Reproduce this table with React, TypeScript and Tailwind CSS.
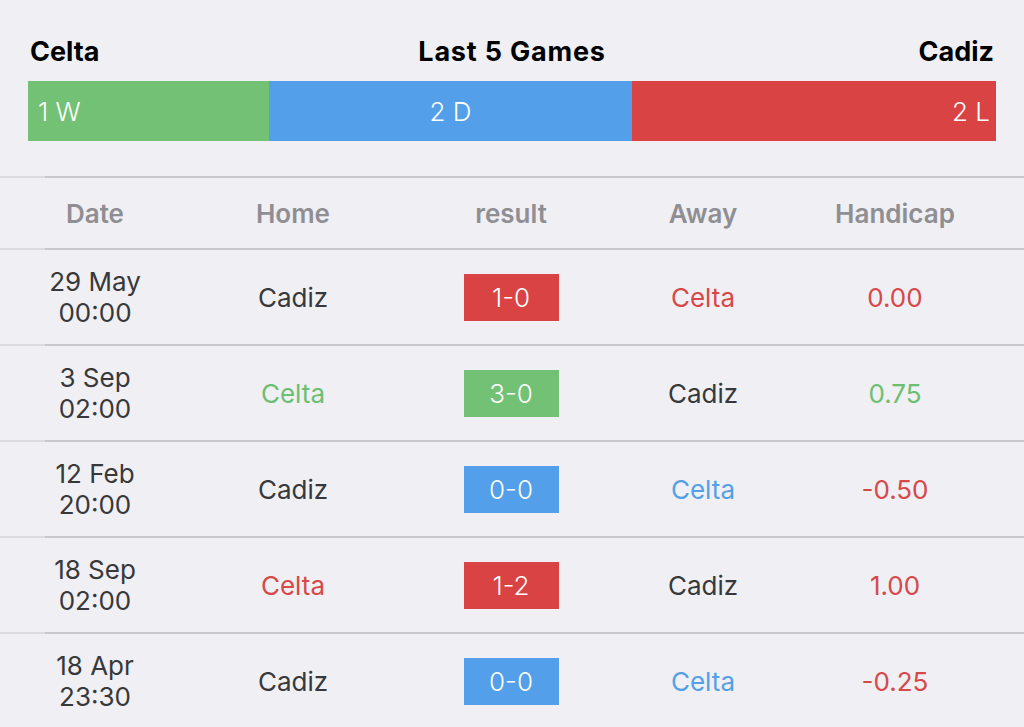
import React from 'react'

type Tone = 'red' | 'green' | 'blue' | 'dark'

interface Match {
	day: string
	time: string
	home: string
	homeTone: Tone
	score: string
	scoreTone: Tone
	away: string
	awayTone: Tone
	handicap: string
	handicapTone: Tone
}

const textTone: Record<Tone, string> = {
	red: 'text-[#d74848]',
	green: 'text-[#6cbf70]',
	blue: 'text-[#54a0e6]',
	dark: 'text-[#38383a]',
}

const badgeTone: Record<Tone, string> = {
	red: 'bg-[#d94343]',
	green: 'bg-[#72c175]',
	blue: 'bg-[#539fe9]',
	dark: 'bg-[#38383a]',
}

const matches: Match[] = [
	{ day: '29 May', time: '00:00', home: 'Cadiz', homeTone: 'dark', score: '1-0', scoreTone: 'red', away: 'Celta', awayTone: 'red', handicap: '0.00', handicapTone: 'red' },
	{ day: '3 Sep', time: '02:00', home: 'Celta', homeTone: 'green', score: '3-0', scoreTone: 'green', away: 'Cadiz', awayTone: 'dark', handicap: '0.75', handicapTone: 'green' },
	{ day: '12 Feb', time: '20:00', home: 'Cadiz', homeTone: 'dark', score: '0-0', scoreTone: 'blue', away: 'Celta', awayTone: 'blue', handicap: '-0.50', handicapTone: 'red' },
	{ day: '18 Sep', time: '02:00', home: 'Celta', homeTone: 'red', score: '1-2', scoreTone: 'red', away: 'Cadiz', awayTone: 'dark', handicap: '1.00', handicapTone: 'red' },
	{ day: '18 Apr', time: '23:30', home: 'Cadiz', homeTone: 'dark', score: '0-0', scoreTone: 'blue', away: 'Celta', awayTone: 'blue', handicap: '-0.25', handicapTone: 'red' },
]

const cols = 'grid grid-cols-[190px_206px_230px_154px_230px]'

function Separator() {
	return (
		<div className="flex h-[2px]">
			<div className="w-[45px] bg-[#dcdce0]" />
			<div className="flex-1 bg-[#c8c8cc]" />
		</div>
	)
}

export default function App() {
	return (
		<div className="w-[1024px] h-[727px] overflow-hidden bg-[#efeff4] font-['Inter','Liberation_Sans',sans-serif]">
			<div className="px-[28px] pt-[34px]">
				<div className="flex items-center justify-between h-[36px] text-[27px] font-bold text-black px-[2px]">
					<span>Celta</span>
					<span className="ml-[6px] tracking-[0.8px]">Last 5 Games</span>
					<span>Cadiz</span>
				</div>
				<div className="mt-[11px] flex h-[60px] text-white text-[26px] font-light">
					<div className="w-[241px] bg-[#72c175] flex items-center pl-[10px]">1 W</div>
					<div className="w-[363px] bg-[#539fe9] flex items-center justify-center">2 D</div>
					<div className="flex-1 bg-[#d94343] flex items-center justify-end pr-[6px]">2 L</div>
				</div>
			</div>

			<div className="mt-[35px]">
				<Separator />
				<div className={`${cols} h-[70px] items-center text-center text-[26px] font-semibold text-[#8e8e93]`}>
					<span>Date</span>
					<span>Home</span>
					<span>result</span>
					<span>Away</span>
					<span>Handicap</span>
				</div>
				{matches.map((m, i) => (
					<div key={i}>
						<Separator />
						<div className={`${cols} h-[94px] items-center text-center text-[26px]`}>
							<div className="leading-[31px] text-[#38383a]">
								<div>{m.day}</div>
								<div>{m.time}</div>
							</div>
							<span className={textTone[m.homeTone]}>{m.home}</span>
							<div className="flex justify-center">
								<span className={`${badgeTone[m.scoreTone]} w-[95px] h-[47px] flex items-center justify-center text-white font-light`}>
									{m.score}
								</span>
							</div>
							<span className={textTone[m.awayTone]}>{m.away}</span>
							<span className={textTone[m.handicapTone]}>{m.handicap}</span>
						</div>
					</div>
				))}
				<Separator />
			</div>
		</div>
	)
}
